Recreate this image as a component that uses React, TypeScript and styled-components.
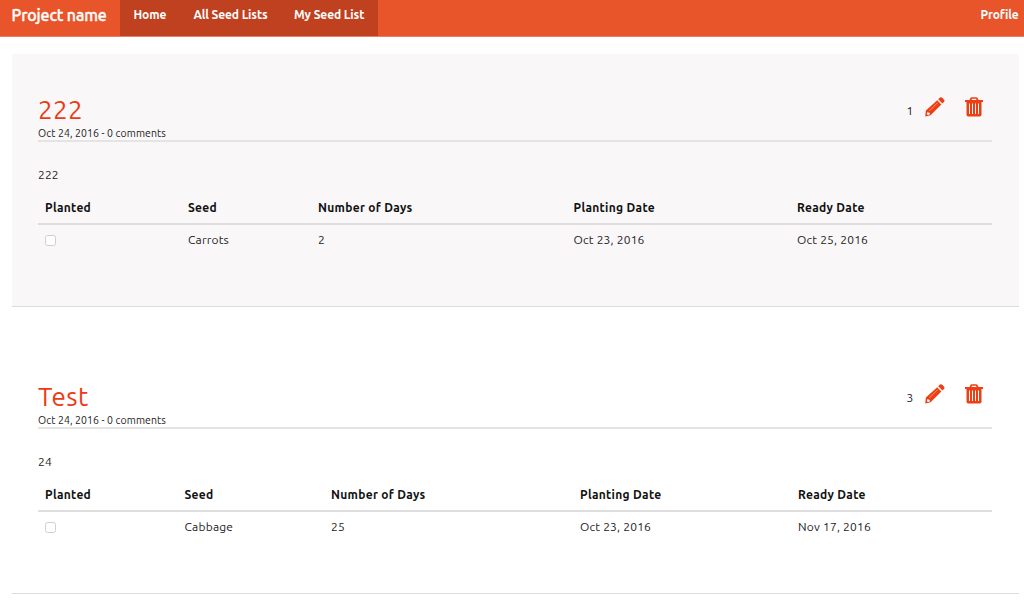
import React from 'react';
import styled, { createGlobalStyle } from 'styled-components';

const Global = createGlobalStyle`
  * { box-sizing: border-box; }
  body {
    margin: 0;
    background: #fff;
    color: #1c1c1c;
    font-family: Ubuntu, "Noto Sans", "Open Sans", sans-serif;
    font-size: 12px;
    overflow: hidden;
  }
`;

const Navbar = styled.nav`
  display: flex;
  height: 37px;
  background: #e9552b;
  border-bottom: 1px solid #e58068;
  line-height: 17px;
`;

const Brand = styled.a`
  width: 120px;
  padding: 7px 0 0 11.5px;
  color: #fff;
  font-size: 16px;
  font-weight: 500;
  letter-spacing: -0.15px;
  -webkit-text-stroke: 0.35px #fff;
  white-space: nowrap;
`;

const NavItem = styled.a<{ $width: number; $active?: boolean; $spacing: number }>`
  width: ${(p) => p.$width}px;
  height: 36px;
  padding: 6px 0 0 13.5px;
  background: ${(p) => (p.$active ? '#bf411f' : 'transparent')};
  color: #fff;
  font-weight: 600;
  letter-spacing: ${(p) => p.$spacing}px;
  white-space: nowrap;
`;

const Spacer = styled.div`
  flex: 1;
`;

const Lists = styled.main`
  display: flex;
  flex-direction: column;
  gap: 34px;
  padding: 17px 5px 0 12px;
`;

const Panel = styled.section<{ $shaded: boolean }>`
  height: 253px;
  padding: 0 27px 0 26px;
  background: ${(p) => (p.$shaded ? '#f9f7f8' : '#fff')};
  border-bottom: 1px solid #dcdcdc;
`;

const PanelHeader = styled.header`
  display: flex;
  justify-content: space-between;
  height: 88px;
  padding-top: 38px;
  border-bottom: 2px solid #e5e4e4;
`;

const Title = styled.h2<{ $spacing: number }>`
  margin: 0;
  color: #ec3b14;
  font-size: 26px;
  font-weight: 400;
  line-height: 35px;
  letter-spacing: ${(p) => p.$spacing}px;
`;

const Meta = styled.div`
  font-size: 10.5px;
  line-height: 12px;
  letter-spacing: 0.08px;
  white-space: nowrap;
`;

const Actions = styled.div`
  display: flex;
  align-items: flex-start;
  padding: 5px 9px 0 0;
`;

const Count = styled.span`
  width: 18.5px;
  padding-top: 6px;
  font-size: 12px;
  line-height: 16px;
`;

const IconButton = styled.button`
  display: block;
  margin: 0 0 0 20px;
  padding: 0;
  border: 0;
  background: none;
  color: #ec3f14;
  line-height: 0;
  &:first-of-type { margin-left: 0; }
`;

const Description = styled.p`
  margin: 24px 0 0;
  letter-spacing: 0.15px;
  line-height: 18px;
`;

const Table = styled.table`
  width: 954px;
  margin-top: 12px;
  border-collapse: separate;
  border-spacing: 0;
  table-layout: fixed;
  line-height: 18px;
`;

const Column = styled.col<{ $width: number }>`
  width: ${(p) => p.$width}px;
`;

const HeadCell = styled.th`
  height: 29px;
  padding: 3px 0 6px 7px;
  border-bottom: 2px solid #dfdede;
  color: #111;
  font-size: 12px;
  font-weight: 700;
  letter-spacing: 0.3px;
  text-align: left;
  white-space: nowrap;
`;

const Cell = styled.td`
  height: 32px;
  padding: 6px 0 7px 7px;
  letter-spacing: 0.2px;
  vertical-align: top;
`;

const Checkbox = styled.input`
  appearance: none;
  display: block;
  width: 11px;
  height: 11px;
  margin: 4px 0 0;
  border: 1px solid #cfcfcf;
  border-radius: 2.5px;
  background: #fff;
`;

const Pencil = () => (
  <svg width="20" height="20" viewBox="0 0 20 20" fill="currentColor">
    <path d="M13.2 2.3 15 .6q1-.8 2 0l2.1 2.1q.8 1 0 2l-1.7 1.8z" />
    <path
      fillRule="evenodd"
      d="M12.2 3.3 16.4 7.5 5.6 18.3.2 19.5 .9 13.600zM2.4 15 1.9 17l.9.9 2-.5-.2-1.6-1.5-.2z"
    />
    <path d="m4.5 13.8 8.2-8.2" stroke="#f6a58f" strokeWidth=".8" />
  </svg>
);

const Trash = () => (
  <svg width="18" height="20" viewBox="0 0 18 20" fill="currentColor">
    <path
      fillRule="evenodd"
      d="M4.500 3 5.400 1.100Q5.800.2 6.800.2h4.400q1 0 1.400.9L13.500 3h4q.5 0 .5.5v1.500H0V3.500q0-.5.5-.5zM6.500 3h5L11 1.700H7z"
    />
    <path
      fillRule="evenodd"
      d="M1.500 4.500h15v13.300q0 1.700-1.700 1.700H3.200q-1.700 0-1.700-1.700zM4 6.500v10.500h1V6.500zM7 6.500v10.500h1V6.500zM10 6.500v10.500h1V6.500zM13 6.500v10.500h1V6.500z"
    />
  </svg>
);

interface SeedList {
  title: string;
  titleSpacing: number;
  count: number;
  description: string;
  columns: number[];
  row: string[];
}

const headings = ['Planted', 'Seed', 'Number of Days', 'Planting Date', 'Ready Date'];

const seedLists: SeedList[] = [
  {
    title: '222',
    titleSpacing: 0.3,
    count: 1,
    description: '222',
    columns: [143, 130, 255.5, 223.5, 202],
    row: ['Carrots', '2', 'Oct 23, 2016', 'Oct 25, 2016'],
  },
  {
    title: 'Test',
    titleSpacing: 0.4,
    count: 3,
    description: '24',
    columns: [139.5, 146.5, 249, 218, 201],
    row: ['Cabbage', '25', 'Oct 23, 2016', 'Nov 17, 2016'],
  },
];

const App = () => (
  <>
    <Global />
    <Navbar>
      <Brand>Project name</Brand>
      <NavItem $active $width={60} $spacing={-0.1}>Home</NavItem>
      <NavItem $active $width={100.5} $spacing={-0.12}>All Seed Lists</NavItem>
      <NavItem $active $width={97.5} $spacing={-0.09}>My Seed List</NavItem>
      <Spacer />
      <NavItem $width={57} $spacing={-0.1}>Profile</NavItem>
    </Navbar>
    <Lists>
      {seedLists.map((list, index) => (
        <Panel key={list.title} $shaded={index % 2 === 0}>
          <PanelHeader>
            <div>
              <Title $spacing={list.titleSpacing}>{list.title}</Title>
              <Meta>Oct 24, 2016 - 0 comments</Meta>
            </div>
            <Actions>
              <Count>{list.count}</Count>
              <IconButton aria-label="Edit"><Pencil /></IconButton>
              <IconButton aria-label="Delete"><Trash /></IconButton>
            </Actions>
          </PanelHeader>
          <Description>{list.description}</Description>
          <Table>
            <colgroup>
              {list.columns.map((width, i) => <Column key={i} $width={width} />)}
            </colgroup>
            <thead>
              <tr>{headings.map((h) => <HeadCell key={h}>{h}</HeadCell>)}</tr>
            </thead>
            <tbody>
              <tr>
                <Cell><Checkbox type="checkbox" /></Cell>
                {list.row.map((value, i) => <Cell key={i}>{value}</Cell>)}
              </tr>
            </tbody>
          </Table>
        </Panel>
      ))}
    </Lists>
  </>
);

export default App;
